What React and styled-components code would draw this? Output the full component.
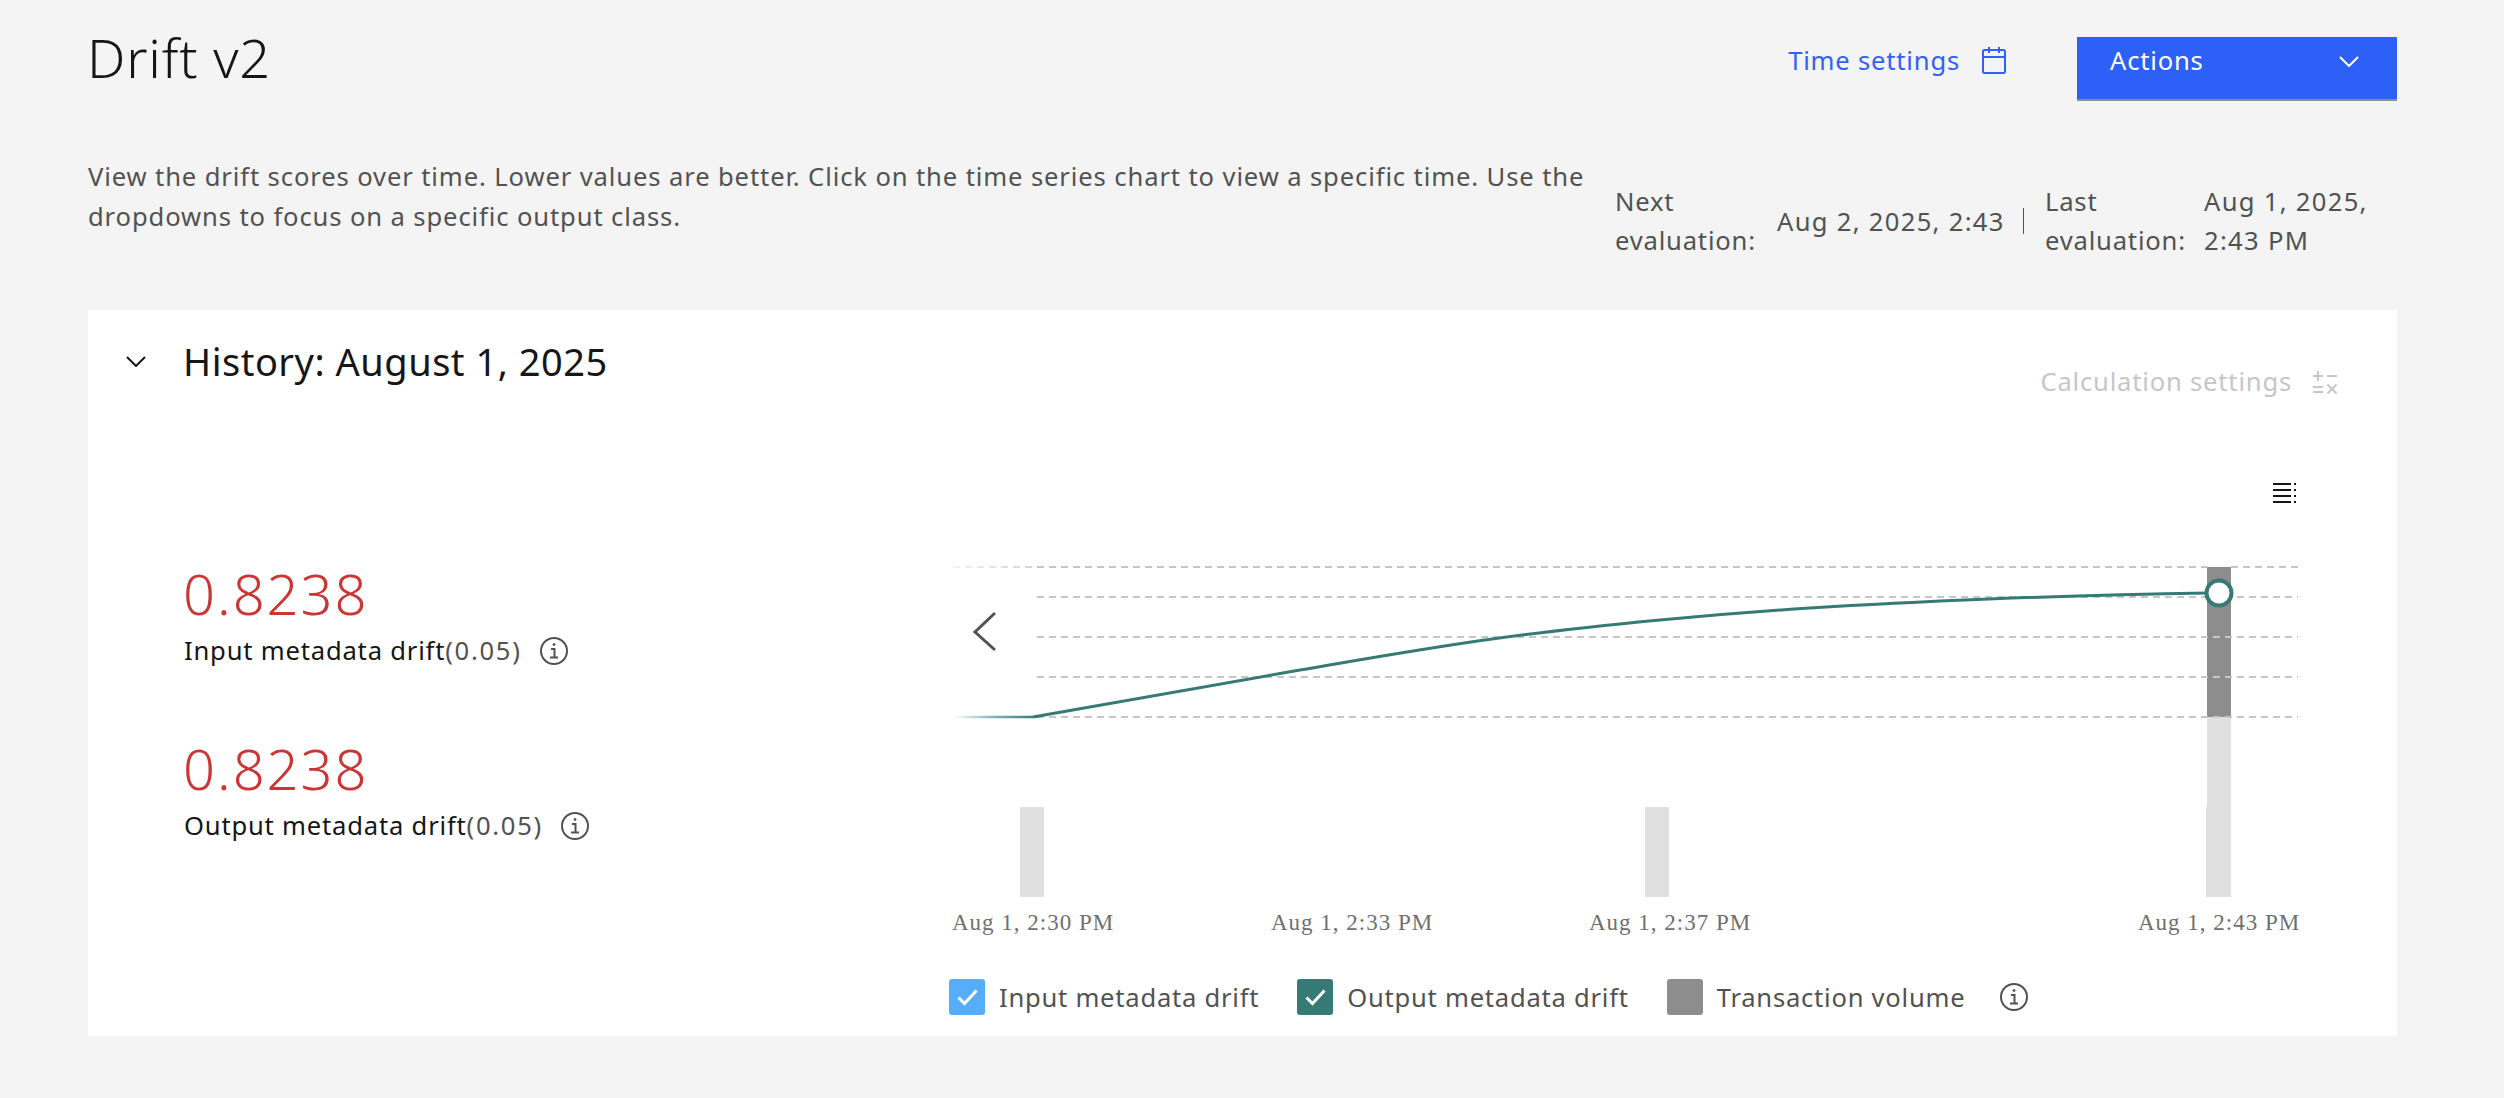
import React from "react";
import styled, { createGlobalStyle } from "styled-components";

const GlobalStyle = createGlobalStyle`
  html, body {
    margin: 0;
    padding: 0;
    background: #f4f4f4;
    font-family: "Noto Sans", "Liberation Sans", sans-serif;
    letter-spacing: 0.8px;
  }
`;

const Page = styled.div`
  width: 2504px;
  height: 1098px;
  box-sizing: border-box;
  padding: 0 107px 0 88px;
  overflow: hidden;
`;

const Header = styled.header`
  display: flex;
  align-items: flex-start;
  height: 157px;
`;

const Title = styled.h1`
  margin: 27px 0 0 -1px;
  font-size: 54px;
  line-height: 60px;
  font-weight: 300;
  letter-spacing: 0.8px;
  color: #161616;
`;

const TimeSettings = styled.a`
  display: flex;
  align-items: center;
  gap: 22px;
  margin: 47px 71px 0 auto;
  height: 27px;
  font-size: 25.6px;
  color: #3062f5;
`;

const ActionsButton = styled.button`
  display: flex;
  justify-content: space-between;
  align-items: flex-start;
  width: 320px;
  height: 64px;
  box-sizing: border-box;
  margin-top: 37px;
  padding: 4px 38px 0 33px;
  border: 0;
  border-bottom: 2px solid #8d8d8d;
  background: #2d60f6;
  color: #fff;
  font: inherit;
  font-size: 25.6px;
  line-height: 40px;
  letter-spacing: 0.8px;
`;

const ButtonChevron = styled.span`
  display: flex;
  margin-top: 15px;
`;

const InfoRow = styled.section`
  display: flex;
  justify-content: space-between;
  height: 153px;
`;

const Description = styled.p`
  margin: 0;
  width: 1510px;
  font-size: 25.6px;
  line-height: 40px;
  letter-spacing: 0.88px;
  color: #525252;
`;

const Meta = styled.div`
  display: grid;
  grid-template-columns: 162px 247px 21px 159px 193px;
  align-items: center;
  align-self: flex-start;
  margin-top: 25px;
  font-size: 25.6px;
  line-height: 39px;
  color: #525252;
  white-space: nowrap;
`;

const MetaValue = styled.span`
  letter-spacing: 1.3px;
`;

const Separator = styled.span`
  width: 1px;
  height: 26px;
  background: #525252;
  margin-left: -1px;
`;

const Card = styled.section`
  height: 726px;
  box-sizing: border-box;
  padding: 26px 60px 0 38px;
  background: #fff;
`;

const CardHead = styled.div`
  display: flex;
  align-items: flex-start;
  height: 134px;
`;

const Toggle = styled.span`
  display: flex;
  margin: 20px 37px 0 0;
`;

const CardTitle = styled.h2`
  margin: 0;
  font-size: 38px;
  line-height: 50px;
  font-weight: 400;
  letter-spacing: 0.5px;
  color: #161616;
`;

const CalcSettings = styled.div`
  display: flex;
  align-items: center;
  gap: 21px;
  margin: 31px 0 0 auto;
  font-size: 25.6px;
  line-height: 30px;
  color: #c6c6c6;
`;

const CardBody = styled.div`
  display: grid;
  grid-template-columns: 814px 1fr;
`;

const Scores = styled.div`
  display: flex;
  flex-direction: column;
  gap: 64px;
  padding: 89px 0 0 57px;
`;

const Score = styled.div`
  display: flex;
  flex-direction: column;
  gap: 5px;
`;

const ScoreValue = styled.div`
  font-size: 56px;
  line-height: 68px;
  font-weight: 300;
  letter-spacing: 2px;
  color: #cd3434;
`;

const ScoreLabel = styled.div`
  display: flex;
  align-items: center;
  margin-left: 1px;
  font-size: 25.6px;
  line-height: 38px;
  color: #161616;
`;

const Threshold = styled.span`
  color: #525252;
  letter-spacing: 1.7px;
  margin-right: 18px;
`;

const ChartColumn = styled.div`
  display: flex;
  flex-direction: column;
  align-items: flex-start;
`;

const ChartSvg = styled.svg`
  display: block;
  width: 1370px;
  height: 470px;
  font-family: "Liberation Serif", serif;
`;

const Legend = styled.div`
  display: flex;
  align-items: center;
  margin: 39px 0 0 9px;
  font-size: 25.6px;
  letter-spacing: 0.75px;
  color: #525252;
`;

const LegendItem = styled.div`
  display: flex;
  align-items: center;
  gap: 14px;
  margin-right: 38px;
`;

const LegendInfo = styled.span`
  display: flex;
  margin-left: -3px;
`;

const Swatch = styled.span`
  display: flex;
  align-items: center;
  justify-content: center;
  width: 36px;
  height: 36px;
  border-radius: 3px;
  background: ${(p) => p.$color};
`;

const CalendarIcon = () => (
  <svg width="24" height="27" viewBox="0 0 24 27" fill="none" stroke="#3062f5" strokeWidth="2">
    <rect x="1" y="3" width="22" height="23" rx="1.5" />
    <path d="M1 10h22M7 0v6M17 0v6" />
  </svg>
);

const ChevronDown = ({ width, color, strokeWidth }) => (
  <svg width={width} height={width / 2 + 1} viewBox="0 0 20 11" fill="none" stroke={color} strokeWidth={strokeWidth}>
    <path d="M1 1l9 9 9-9" />
  </svg>
);

const CalcIcon = () => (
  <svg width="24" height="23" viewBox="0 0 24 23" fill="none" stroke="#c6c6c6" strokeWidth="2">
    <path d="M0 5h10M5 0v10M14 5h10M0 16h10M0 21h10M14.500 13.500l9 9M23.500 13.500l-9 9" />
  </svg>
);

const InfoIcon = () => (
  <svg width="28" height="28" viewBox="0 0 28 28" fill="none" stroke="#525252" strokeWidth="2">
    <circle cx="14" cy="14" r="13" />
    <path d="M11 12h3.500v8M10 20.500h8" />
    <circle cx="14" cy="7.500" r="1" fill="#525252" strokeWidth="1" />
  </svg>
);

const CheckIcon = () => (
  <svg width="21" height="17" viewBox="0 0 21 17" fill="none" stroke="#fff" strokeWidth="3">
    <path d="M1.500 8.500l6 6 12-13" />
  </svg>
);

const MenuIcon = () => (
  <g stroke="#161616" strokeWidth="2">
    <path d="M2273 484h18M2273 490h18M2273 496h18M2273 502h18" />
    <path d="M2294 484h2M2294 490h2M2294 496h2M2294 502h2" />
  </g>
);

const gridLines = [597, 637, 677];
const volumeBars = [1020, 1645];
const ticks = [
  ["Aug 1, 2:30 PM", 952],
  ["Aug 1, 2:33 PM", 1271],
  ["Aug 1, 2:37 PM", 1589],
  ["Aug 1, 2:43 PM", 2138],
];

const Chart = () => (
  <ChartSvg viewBox="940 470 1370 470">
    <defs>
      <linearGradient id="fade-line" x1="953" x2="1037" y1="0" y2="0" gradientUnits="userSpaceOnUse">
        <stop offset="0" stopColor="#fff" />
        <stop offset="0.5" stopColor="#7fb0bb" />
        <stop offset="1" stopColor="#367a75" />
      </linearGradient>
      <linearGradient id="fade-grid" x1="953" x2="1037" y1="0" y2="0" gradientUnits="userSpaceOnUse">
        <stop offset="0" stopColor="#eeeeee" />
        <stop offset="1" stopColor="#c6c6c6" />
      </linearGradient>
    </defs>
    <MenuIcon />
    <rect x="2207" y="567" width="24" height="150" fill="#8d8d8d" />
    <rect x="2207" y="717" width="24" height="90" fill="#e0e0e0" />
    <rect x="2206" y="807" width="25" height="90" fill="#e0e0e0" />
    {volumeBars.map((x) => (
      <rect key={x} x={x} y="807" width="24" height="90" fill="#e0e0e0" />
    ))}
    <path d="M953 567H1037" stroke="url(#fade-grid)" strokeWidth="1.500" strokeDasharray="7 5" />
    <path d="M1037 567H2207M2231 567H2298" stroke="#c6c6c6" strokeWidth="2" strokeDasharray="7 5" />
    {gridLines.map((y) => (
      <path key={y} d={`M1037 ${y}H2298`} stroke="#c6c6c6" strokeWidth="2" strokeDasharray="7 5" />
    ))}
    <path d="M953 717H2298" stroke="#c6c6c6" strokeWidth="2" strokeDasharray="7 5" />
    <path d="M953 717H1033" stroke="url(#fade-line)" strokeWidth="2.500" fill="none" />
    <path
      d="M1033 717L1300 670C1364 659.100 1428 647.800 1492 639C1548 631.300 1604 625.400 1660 620C1710 615.200 1760 611.200 1810 608C1870 604.200 1929 601.400 1989 599C2062 596.100 2134 594 2207 593"
      stroke="#367a75"
      strokeWidth="3"
      fill="none"
    />
    <circle cx="2219" cy="593" r="12.500" fill="#fff" stroke="#367a75" strokeWidth="4" />
    <path d="M995 613L975 632L995 650" stroke="#525252" strokeWidth="3" fill="none" />
    {ticks.map(([label, x]) => (
      <text key={label} x={x} y="930" fontSize="23" letterSpacing="1" fill="#6f6f6f">
        {label}
      </text>
    ))}
  </ChartSvg>
);

export default function App() {
  return (
    <Page>
      <GlobalStyle />
      <Header>
        <Title>Drift v2</Title>
        <TimeSettings>
          Time settings
          <CalendarIcon />
        </TimeSettings>
        <ActionsButton>
          Actions
          <ButtonChevron>
            <ChevronDown width={20} color="#fff" strokeWidth={2} />
          </ButtonChevron>
        </ActionsButton>
      </Header>
      <InfoRow>
        <Description>
          View the drift scores over time. Lower values are better. Click on the time series chart to view a specific
          time. Use the dropdowns to focus on a specific output class.
        </Description>
        <Meta>
          <span>
            Next
            <br />
            evaluation:
          </span>
          <MetaValue>Aug 2, 2025, 2:43</MetaValue>
          <Separator />
          <span>
            Last
            <br />
            evaluation:
          </span>
          <MetaValue>
            Aug 1, 2025,
            <br />
            2:43 PM
          </MetaValue>
        </Meta>
      </InfoRow>
      <Card>
        <CardHead>
          <Toggle>
            <ChevronDown width={20} color="#161616" strokeWidth={2} />
          </Toggle>
          <CardTitle>History: August 1, 2025</CardTitle>
          <CalcSettings>
            Calculation settings
            <CalcIcon />
          </CalcSettings>
        </CardHead>
        <CardBody>
          <Scores>
            <Score>
              <ScoreValue>0.8238</ScoreValue>
              <ScoreLabel>
                Input metadata drift<Threshold>(0.05)</Threshold>
                <InfoIcon />
              </ScoreLabel>
            </Score>
            <Score>
              <ScoreValue>0.8238</ScoreValue>
              <ScoreLabel>
                Output metadata drift<Threshold>(0.05)</Threshold>
                <InfoIcon />
              </ScoreLabel>
            </Score>
          </Scores>
          <ChartColumn>
            <Chart />
            <Legend>
              <LegendItem>
                <Swatch $color="#56adf9">
                  <CheckIcon />
                </Swatch>
                Input metadata drift
              </LegendItem>
              <LegendItem>
                <Swatch $color="#367a75">
                  <CheckIcon />
                </Swatch>
                Output metadata drift
              </LegendItem>
              <LegendItem>
                <Swatch $color="#8d8d8d" />
                Transaction volume
              </LegendItem>
              <LegendInfo>
                <InfoIcon />
              </LegendInfo>
            </Legend>
          </ChartColumn>
        </CardBody>
      </Card>
    </Page>
  );
}
